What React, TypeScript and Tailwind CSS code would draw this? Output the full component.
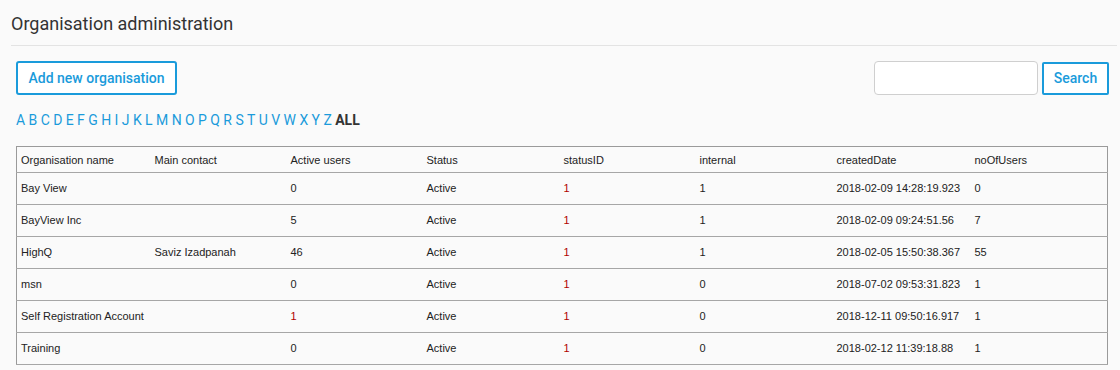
const letters = "ABCDEFGHIJKLMNOPQRSTUVWXYZ".split("");

type Org = {
  name: string;
  contact: string;
  active: string;
  status: string;
  statusId: string;
  internal: string;
  created: string;
  users: string;
};

const orgs: Org[] = [
  { name: "Bay View", contact: "", active: "0", status: "Active", statusId: "1", internal: "1", created: "2018-02-09 14:28:19.923", users: "0" },
  { name: "BayView Inc", contact: "", active: "5", status: "Active", statusId: "1", internal: "1", created: "2018-02-09 09:24:51.56", users: "7" },
  { name: "HighQ", contact: "Saviz Izadpanah", active: "46", status: "Active", statusId: "1", internal: "1", created: "2018-02-05 15:50:38.367", users: "55" },
  { name: "msn", contact: "", active: "0", status: "Active", statusId: "1", internal: "0", created: "2018-07-02 09:53:31.823", users: "1" },
  { name: "Self Registration Account", contact: "", active: "1", status: "Active", statusId: "1", internal: "0", created: "2018-12-11 09:50:16.917", users: "1" },
  { name: "Training", contact: "", active: "0", status: "Active", statusId: "1", internal: "0", created: "2018-02-12 11:39:18.88", users: "1" },
];

const headers = [
  "Organisation name",
  "Main contact",
  "Active users",
  "Status",
  "statusID",
  "internal",
  "createdDate",
  "noOfUsers",
];

export default function App() {
  return (
    <div className="h-[370px] w-full bg-[#fafafa] font-['Roboto',sans-serif]">
      {/* Page header */}
      <div className="pl-[11px] pr-[3px]">
        <h1 className="pt-[11px] pb-[8px] text-[18px] leading-[26px] font-normal text-[#333]">
          Organisation administration
        </h1>
        <div className="h-px bg-[#e3e3e3]" />
      </div>

      <div className="pl-[16px] pr-[11px]">
        {/* Toolbar */}
        <div className="mt-[15px] flex items-center justify-between">
          <button
            type="button"
            className="h-[34px] w-[161px] rounded-[3px] border-2 border-[#1a9bdb] bg-white text-[14px] font-medium text-[#1a9bdb]"
          >
            Add new organisation
          </button>
          <div className="flex items-center gap-[4px]">
            <input
              type="text"
              className="h-[34px] w-[164px] rounded-[4px] border border-[#cfcfcf] bg-white px-2 text-[14px] outline-none"
            />
            <button
              type="button"
              className="h-[33px] w-[67px] rounded-[2px] border-2 border-[#1a9bdb] bg-white text-[14px] font-medium text-[#1a9bdb]"
            >
              Search
            </button>
          </div>
        </div>

        {/* Alphabet filter */}
        <div className="mt-[17px] text-[14px] leading-[16px] text-[#1a9bdb]">
          {letters.map((l) => (
            <a key={l} href="#" className="mr-[3.4px]">
              {l}
            </a>
          ))}
          <a href="#" className="font-bold text-[#333]">
            ALL
          </a>
        </div>

        {/* Table */}
        <table className="mt-[18px] w-[1092px] table-fixed border-collapse border border-[#9a9a9a] font-['Liberation_Sans',Arial,sans-serif] text-[11px] text-[#222]">
          <colgroup>
            <col className="w-[134px]" />
            <col className="w-[136px]" />
            <col className="w-[136px]" />
            <col className="w-[137px]" />
            <col className="w-[136px]" />
            <col className="w-[137px]" />
            <col className="w-[138px]" />
            <col />
          </colgroup>
          <thead>
            <tr className="h-[26px] border-b border-[#a6a6a6]">
              {headers.map((h) => (
                <th key={h} className="px-[4px] pt-[2px] text-left font-normal">
                  {h}
                </th>
              ))}
            </tr>
          </thead>
          <tbody>
            {orgs.map((o) => (
              <tr key={o.name} className="h-[32px] border-b border-[#a6a6a6]">
                <td className="px-[4px]">{o.name}</td>
                <td className="px-[4px]">{o.contact}</td>
                <td className={o.active === "1" ? "px-[4px] text-[#b00000]" : "px-[4px]"}>
                  {o.active}
                </td>
                <td className="px-[4px]">{o.status}</td>
                <td className="px-[4px] text-[#b00000]">{o.statusId}</td>
                <td className="px-[4px]">{o.internal}</td>
                <td className="px-[4px]">{o.created}</td>
                <td className="px-[4px]">{o.users}</td>
              </tr>
            ))}
          </tbody>
        </table>
      </div>
    </div>
  );
}
